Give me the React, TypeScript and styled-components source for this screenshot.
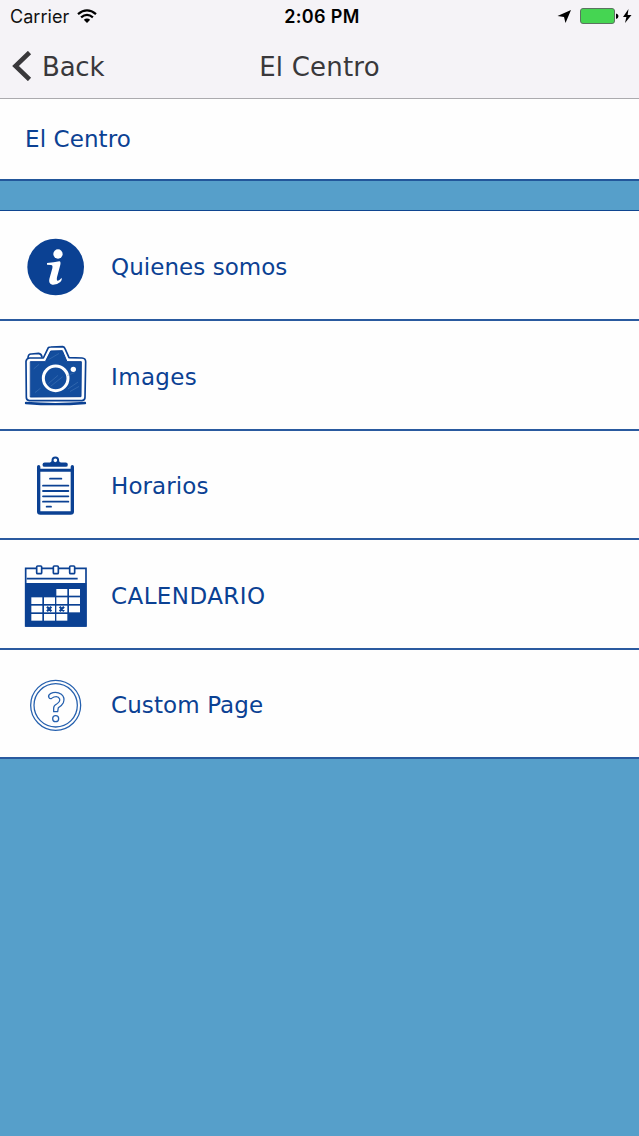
import React from 'react';
import styled, { createGlobalStyle } from 'styled-components';

const Global = createGlobalStyle`
  body { margin: 0; background: #569fca; }
  * { box-sizing: border-box; }
`;

const blue = '#0b4193';

const Screen = styled.div`
  width: 639px;
  min-height: 1136px;
  background: #569fca;
  font-family: 'DejaVu Sans', Verdana, sans-serif;
`;

const Header = styled.header`
  height: 99px;
  padding-top: 1px;
  background: #f5f3f7;
  border-bottom: 1px solid #abaaae;
`;

const Bar = styled.div<{ $h: number }>`
  height: ${(p) => p.$h}px;
  display: grid;
  grid-template-columns: 200px 1fr 200px;
  align-items: center;
`;

const Carrier = styled.div`
  display: flex;
  align-items: center;
  gap: 8px;
  padding-left: 10px;
  font: 400 18px/32px Inter, sans-serif;
  letter-spacing: 0.05px;
  color: #111;

  svg {
    margin-top: -2px;
  }
`;

const Clock = styled.div`
  text-align: center;
  padding-left: 5px;
  font: 600 18px/32px Inter, sans-serif;
  letter-spacing: 0.35px;
  color: #000;
`;

const Indicators = styled.div`
  display: flex;
  justify-content: flex-end;
  padding: 0 4px 2px 0;
`;

const Back = styled.div`
  display: flex;
  align-items: center;
  gap: 10px;
  padding-left: 12px;
  font-size: 26px;
  line-height: 32px;
  letter-spacing: -0.2px;
  color: #39383b;

  svg {
    margin-top: -2px;
  }
`;

const Title = styled.div`
  text-align: center;
  font-size: 26px;
  line-height: 32px;
  letter-spacing: 0.2px;
  color: #39383b;
`;

const Section = styled.section`
  height: 82px;
  padding: 0 25px;
  display: flex;
  align-items: center;
  background: #fefefe;
  border-bottom: 2px solid #22569a;
  color: ${blue};
  font-size: 23px;
  letter-spacing: 0.1px;
`;

const List = styled.ul`
  list-style: none;
  margin: 29px 0 0;
  padding: 0;
  border-top: 1px solid #0f4590;
`;

const Row = styled.li<{ $h: number; $tracking: number }>`
  height: ${(p) => p.$h}px;
  display: flex;
  align-items: center;
  gap: 23px;
  padding: 2px 0 0 24px;
  background: #fefefe;
  border-bottom: 2px solid #2a5a9f;
  color: ${blue};
  font-size: 23px;
  letter-spacing: ${(p) => p.$tracking}px;
`;

const Label = styled.span`
  padding-top: 1px;
`;

const Icon = styled.svg`
  width: 64px;
  height: 64px;
  flex: none;
  overflow: visible;
`;

const InfoIcon = () => (
  <Icon viewBox="42 27 192 192">
    <circle cx="137" cy="126" r="85" fill={blue} />
    <circle cx="144" cy="87" r="14" fill="#fff" />
    <path d="M111 114 Q132 112 148 109 Q153 110 151 119 L141 157 Q139 168 144 167 Q149 165 155 158 Q157 164 151 171 Q141 180 127 179 Q115 176 118 162 L127 130 Q129 120 123 120 L111 119Z" fill="#fff" />
  </Icon>
);

const CameraIcon = () => (
  <Icon viewBox="42 27 192 192" fill="none" stroke={blue} strokeLinejoin="round" strokeLinecap="round">
    <path d="M59 69 L100 69 L115 38 Q117 36 122 36 L158 35 Q163 36 165 41 L177 68 L216 69 Q227 70 227 80 L225 187 Q225 196 216 197 L58 197 Q49 196 49 187 L48 79 Q49 70 59 69Z" strokeWidth="5" fill="#fff" />
    <path d="M54 68 Q55 56 64 57 L86 55 Q94 56 96 66" strokeWidth="5" />
    <path d="M62 80 L106 80 L122 48 L157 47 L171 80 L214 80 L213 185 L62 186Z" strokeWidth="3" fill="#134d9d" />
    <path d="M48 204 Q136 211 225 204" strokeWidth="7" />
    <circle cx="137" cy="130" r="37" stroke="#fff" strokeWidth="9" />
    <circle cx="190" cy="103" r="8" fill="#fff" stroke="none" />
    <path d="M72 101 L86 89 M117 73 L146 56 M76 172 L91 160 M116 145 L143 122 M123 153 L157 126 M175 161 L203 142 M181 169 L206 155 M173 121 L193 113" stroke="#4a7cba" strokeWidth="1.5" />
  </Icon>
);

const ClipboardIcon = () => (
  <Icon viewBox="42 26 192 192" fill="none" stroke={blue} strokeLinecap="round">
    <path d="M86 64 L86 199 Q86 203 91 203 L182 203 Q187 203 187 199 L187 64" strokeWidth="10" />
    <path d="M86 75 H187" strokeWidth="9" />
    <path d="M104 58 H167" strokeWidth="13" />
    <path d="M118 57 L124 49 H148 L154 57Z" fill={blue} strokeWidth="2" />
    <circle cx="136" cy="45" r="8.5" strokeWidth="6" fill="#fff" />
    <path d="M120 100 H154 M99 121 H175 M99 137 H175 M99 153 H175 M99 169 H175 M110 184 H123" strokeWidth="5.5" />
  </Icon>
);

const cells = [
  [139, 102], [177, 102],
  [64, 127], [102, 127], [139, 127], [177, 127],
  [64, 152], [102, 152], [139, 152], [177, 152],
  [64, 177], [102, 177], [139, 177],
];

const CalendarIcon = () => (
  <Icon viewBox="42 24 192 192" fill="none" stroke={blue}>
    <path d="M47 40 H228 V213 H47Z" fill="#fff" strokeWidth="5" />
    <path d="M46 84 H229 V215 H46Z" fill={blue} stroke="none" />
    <path d="M50 71 H203" strokeWidth="5" />
    {[80, 130, 179].map((x) => (
      <rect key={x} x={x} y="33" width="15" height="23" rx="3" fill="#fff" strokeWidth="5" />
    ))}
    {cells.map(([x, y]) => (
      <rect key={`${x}-${y}`} x={x} y={y} width="33" height="20" fill="#fff" stroke="none" />
    ))}
    <path d="M111 155 L124 169 M124 155 L111 169 M149 155 L162 169 M162 155 L149 169" strokeWidth="6.5" />
  </Icon>
);

const QuestionIcon = () => (
  <Icon viewBox="42 23 192 192" fill="none" stroke="#2560ae" strokeWidth="3.8" strokeLinejoin="round">
    <circle cx="137" cy="120" r="75" />
    <circle cx="137" cy="120" r="65" />
    <path d="M117 97 Q113 90 121 85 Q139 77 154 87 Q166 97 160 112 Q157 119 145 127 L143 139 H131 V128 Q131 121 140 116 Q151 109 149 101 Q145 91 132 95 Q126 98 124 100 Q119 101 117 97Z" />
    <circle cx="137" cy="160" r="9" />
  </Icon>
);

const rows = [
  { label: 'Quienes somos', h: 110, tracking: 0.05, icon: <InfoIcon /> },
  { label: 'Images', h: 110, tracking: 0.35, icon: <CameraIcon /> },
  { label: 'Horarios', h: 109, tracking: 0.1, icon: <ClipboardIcon /> },
  { label: 'CALENDARIO', h: 110, tracking: 0.42, icon: <CalendarIcon /> },
  { label: 'Custom Page', h: 109, tracking: 0.1, icon: <QuestionIcon /> },
];

export default function App() {
  return (
    <Screen>
      <Global />
      <Header>
        <Bar $h={32}>
          <Carrier>
            Carrier
            <svg width="20" height="15" viewBox="0 0 20 15" fill="none" stroke="#000" strokeWidth="2.3">
              <path d="M1 5.2 Q10 -2.4 19 5.2 M4.1 8.4 Q10 3.4 15.9 8.4" />
              <path d="M6.8 10.7 Q10 8.3 13.2 10.7 L10 14Z" fill="#000" stroke="none" />
            </svg>
          </Carrier>
          <Clock>2:06 PM</Clock>
          <Indicators>
            <svg width="78" height="20" viewBox="0 0 78 20">
              <path d="M14 4 L0.5 10 L7 11 L8.5 17Z" fill="#000" />
              <rect x="23.5" y="2.5" width="34" height="15" rx="2.5" fill="#45d552" stroke="#5b7360" />
              <path d="M59 7.5 Q61.5 8 61.5 10 Q61.5 12.4 59 13Z" fill="#000" />
              <path d="M71.5 3 L66 11 H69.4 L68 17 L74.5 9 H70.6Z" fill="#000" />
            </svg>
          </Indicators>
        </Bar>
        <Bar $h={68}>
          <Back>
            <svg width="20" height="30" viewBox="0 0 20 30" fill="none" stroke="#39383b" strokeWidth="4.6">
              <path d="M17.5 1.5 L3.5 15 L17.5 28.5" />
            </svg>
            Back
          </Back>
          <Title>El Centro</Title>
        </Bar>
      </Header>
      <Section>El Centro</Section>
      <List>
        {rows.map((r) => (
          <Row key={r.label} $h={r.h} $tracking={r.tracking}>
            {r.icon}
            <Label>{r.label}</Label>
          </Row>
        ))}
      </List>
    </Screen>
  );
}
